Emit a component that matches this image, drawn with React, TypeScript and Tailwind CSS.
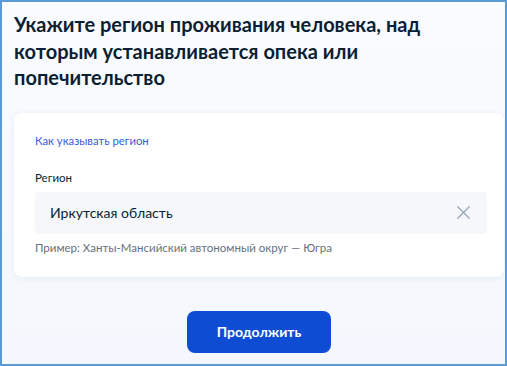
import React from 'react'

export default function App() {
  return (
    <div className="w-[507px] h-[366px] overflow-hidden border-2 border-[#5b9bd5] bg-gradient-to-b from-[#f9fbfe] to-[#f4f7fd] font-['Lato','Noto_Sans',sans-serif] text-[#0b1f33]">
      <div className="pl-3 pt-[9px]">
        <h1 className="text-[20px] leading-[26.5px] font-bold w-[490px]">
          Укажите регион проживания человека, над которым устанавливается опека или попечительство
        </h1>

        <div className="mt-[22px] w-[490px] rounded-lg bg-white shadow-[0_1px_6px_rgba(40,80,160,0.08)] pl-[21px] pr-[17px] pt-[20px] pb-[21px]">
          <a className="block text-[11.3px] leading-[16px] text-[#3a5bd8]">Как указывать регион</a>

          <div className="mt-[21px] text-[11.5px] leading-[16px] text-[#0b1f33]">Регион</div>

          <div className="mt-[6px] h-[42px] rounded bg-[#f5f7fa] flex items-center">
            <span className="ml-[15px] text-[14px] text-[#0b1f33]">Иркутская область</span>
            <svg className="ml-auto mr-[16px]" width="15" height="15" viewBox="0 0 16 16" fill="none">
              <path d="M1.5 1.5L14.5 14.5M14.5 1.5L1.5 14.5" stroke="#8d9cb4" strokeWidth="1.4" />
            </svg>
          </div>

          <div className="mt-[6px] text-[11.5px] leading-[16px] text-[#66727f]">
            Пример: Ханты-Мансийский автономный округ — Югра
          </div>
        </div>

        <div className="w-[490px] flex justify-center mt-[34px]">
          <button className="w-[144px] h-[42px] rounded-lg bg-[#0d4cd3] text-white text-[14px] font-bold">
            Продолжить
          </button>
        </div>
      </div>
    </div>
  )
}
